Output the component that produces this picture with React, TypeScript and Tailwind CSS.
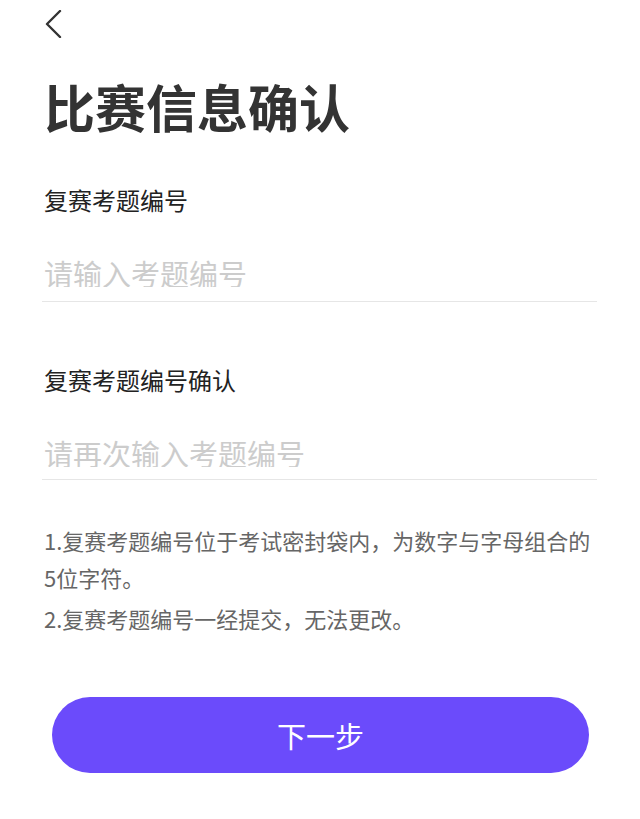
import React, { useState } from 'react';

const font = { fontFamily: '"Noto Sans CJK SC", "Noto Sans", sans-serif' };

export default function App() {
  const [code, setCode] = useState('');
  const [confirmCode, setConfirmCode] = useState('');

  return (
    <div className="min-h-screen bg-white pl-[44px] pr-[43px]" style={font}>
      {/* Back */}
      <div className="pt-[10px]">
        <button className="block h-[26px] w-[20px]">
          <svg width="18" height="28" viewBox="0 0 18 28" fill="none">
            <polyline
              points="16,1 3,14 16,27"
              stroke="#333333"
              strokeWidth="2.4"
              strokeLinecap="round"
              strokeLinejoin="round"
            />
          </svg>
        </button>
      </div>

      {/* Title */}
      <h1 className="mt-[45px] text-[51px] leading-[51px] font-bold text-[#333333]">比赛信息确认</h1>

      {/* Field 1 */}
      <div className="mt-[56px] text-[24px] leading-[24px] text-[#222222]">复赛考题编号</div>
      <div className="mt-[46px] pb-[14px] border-b border-[#e6e6e6] -ml-[2px] pl-[2px]">
        <input
          value={code}
          onChange={(e) => setCode(e.target.value)}
          placeholder="请输入考题编号"
          className="block w-full h-[29px] text-[29px] leading-[29px] text-[#333333] placeholder:text-[#cccccc] outline-none bg-transparent"
        />
      </div>

      {/* Field 2 */}
      <div className="mt-[66px] text-[24px] leading-[24px] text-[#222222]">复赛考题编号确认</div>
      <div className="mt-[46px] pb-[12px] border-b border-[#e6e6e6] -ml-[2px] pl-[2px]">
        <input
          value={confirmCode}
          onChange={(e) => setConfirmCode(e.target.value)}
          placeholder="请再次输入考题编号"
          className="block w-full h-[29px] text-[29px] leading-[29px] text-[#333333] placeholder:text-[#cccccc] outline-none bg-transparent"
        />
      </div>

      {/* Notes */}
      <div className="mt-[42px] text-[22px] leading-[37px] text-[#666666]">
        <p>1.复赛考题编号位于考试密封袋内，为数字与字母组合的5位字符。</p>
        <p className="mt-[4px]">2.复赛考题编号一经提交，无法更改。</p>
      </div>

      {/* Next */}
      <div className="px-[8px] mt-[60px]">
        <button className="w-full h-[76px] rounded-full bg-[#6b4bfb] text-white text-[29px] leading-none flex items-center justify-center">
          下一步
        </button>
      </div>
    </div>
  );
}
